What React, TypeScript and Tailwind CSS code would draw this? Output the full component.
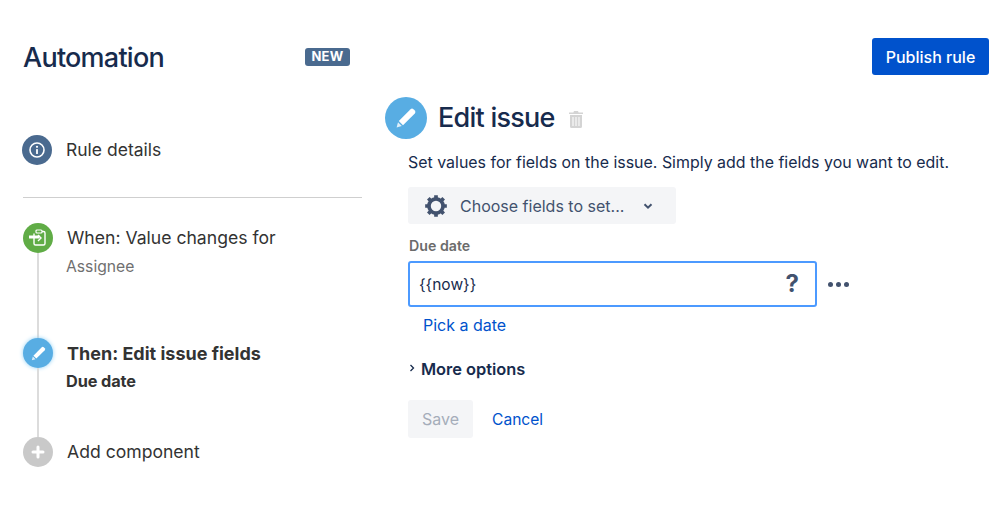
import React from "react";

function Pencil({ size }: { size: number }) {
  return (
    <svg width={size} height={size} viewBox="0 0 24 24" fill="none">
      <path d="M16.6 3.2a2 2 0 0 1 2.8 0l1.4 1.4a2 2 0 0 1 0 2.8L9 19.2l-4.2-4.2L16.6 3.2Z" fill="#fff" />
      <path d="M4 16.2 7.8 20 2.6 21.4 4 16.2Z" fill="#fff" opacity="0.8" />
    </svg>
  );
}

function Step({
  color,
  icon,
  title,
  sub,
  bold,
  line,
  glow,
  h,
}: {
  color: string;
  icon: React.ReactNode;
  title: string;
  sub?: string;
  bold?: boolean;
  line?: boolean;
  glow?: boolean;
  h: string;
}) {
  return (
    <div className={`flex ${h}`}>
      <div className="flex w-[30px] flex-col items-center">
        <div
          className={`flex h-[30px] w-[30px] shrink-0 items-center justify-center rounded-full ${color} ${
            glow ? "shadow-[0_0_4px_#8fd0f5]" : ""
          }`}
        >
          {icon}
        </div>
        {line && <div className="w-[2px] flex-1 bg-[#dcdcdc]" />}
      </div>
      <div className="ml-[14px]">
        <div
          className={`leading-[22px] text-[#333] ${bold ? "mt-[5px] text-[18px] font-bold" : "mt-[4px] text-[17.6px]"}`}
        >
          {title}
        </div>
        {sub && (
          <div
            className={`-ml-[1px] leading-[20px] ${
              bold
                ? "mt-[6px] text-[16.3px] font-bold tracking-[-0.1px] text-[#333]"
                : "mt-[8px] text-[15.7px] text-[#707070]"
            }`}
          >
            {sub}
          </div>
        )}
      </div>
    </div>
  );
}

export default function App() {
  return (
    <div className="flex h-[511px] w-[999px] overflow-hidden bg-white font-['Inter',sans-serif] antialiased">
      <div className="ml-[23px] w-[339px] shrink-0">
        <div className="mt-[38px] flex h-[38px] items-center justify-between pr-[12px]">
          <div className="pt-[1px] text-[27px] font-medium leading-[38px] tracking-[-0.75px] text-[#172b4d]">Automation</div>
          <div className="flex h-[18px] w-[45px] items-center justify-center rounded-[3px] bg-[#4a6a8f] text-[13px] font-bold tracking-[0.3px] text-white">
            NEW
          </div>
        </div>
        <div className="-ml-[1px] mt-[59px] flex h-[30px] items-center">
          <div className="flex h-[30px] w-[30px] items-center justify-center rounded-full bg-[#4a6a8f]">
            <svg width="18" height="18" viewBox="0 0 18 18" fill="none">
              <circle cx="9" cy="9" r="7" stroke="#fff" strokeWidth="1.6" />
              <rect x="8.1" y="8" width="1.8" height="5" rx="0.6" fill="#fff" />
              <circle cx="9" cy="5.8" r="1.1" fill="#fff" />
            </svg>
          </div>
          <div className="ml-[14px] pt-[1px] text-[17.5px] text-[#333]">Rule details</div>
        </div>
        <div className="mt-[32px] h-px bg-[#cfcfcf]" />
        <div className="mt-[25px]">
          <Step
            h="h-[115px]"
            color="bg-[#60ac46]"
            line
            title="When: Value changes for"
            sub="Assignee"
            icon={
              <svg width="20" height="20" viewBox="0 0 20 20" fill="none">
                <path d="M6 5.5V15.5a1.5 1.5 0 0 0 1.5 1.5h8a1.5 1.5 0 0 0 1.5-1.5V5a1.5 1.5 0 0 0-1.5-1.5H14" stroke="#fff" strokeWidth="1.4" />
                <rect x="8" y="2" width="6" height="3" rx="1" stroke="#fff" strokeWidth="1.2" />
                <path d="M1 9h10.5" stroke="#fff" strokeWidth="3" />
                <path d="M10 7l3 3-3 3" stroke="#fff" strokeWidth="1.4" />
              </svg>
            }
          />
          <Step h="h-[99px]" color="bg-[#58ade3]" line glow bold title="Then: Edit issue fields" sub="Due date" icon={<Pencil size={17} />} />
          <Step
            h="h-[30px]"
            color="bg-[#c9c9c9]"
            title="Add component"
            icon={
              <svg width="14" height="14" viewBox="0 0 14 14">
                <path d="M7 2v10M2 7h10" stroke="#fff" strokeWidth="3" strokeLinecap="round" />
              </svg>
            }
          />
        </div>
      </div>

      <div className="ml-[23px] flex-1 pr-[10px]">
        <div className="mt-[38px] flex justify-end">
          <div className="flex h-[37px] w-[117px] items-center justify-center rounded-[3px] bg-[#0052cc] text-[16px] font-medium text-white">
            Publish rule
          </div>
        </div>
        <div className="mt-[22px] flex h-[42px] items-center">
          <div className="flex h-[42px] w-[42px] items-center justify-center rounded-full bg-[#58ade3]">
            <Pencil size={24} />
          </div>
          <div className="ml-[11px] text-[27px] font-medium tracking-[-0.75px] text-[#172b4d]">Edit issue</div>
          <svg className="ml-[14px] mt-[2px]" width="14" height="17" viewBox="0 0 14 17" fill="#d4d4d4">
            <path d="M5 0h4l.6 1.5H14V3H0V1.5h4.4L5 0Z" />
            <path d="M1 4h12v11.5a1.5 1.5 0 0 1-1.5 1.5h-9A1.5 1.5 0 0 1 1 15.5V4Zm2.5 2v9h1V6h-1Zm3 0v9h1V6h-1Zm3 0v9h1V6h-1Z" fillRule="evenodd" />
          </svg>
        </div>
        <div className="ml-[23px]">
          <div className="mt-[12px] text-[15.95px] leading-[24px] text-[#172b4d]">
            Set values for fields on the issue. Simply add the fields you want to edit.
          </div>
          <div className="mt-[12px] flex h-[37px] w-[268px] items-center rounded-[3px] bg-[#f4f5f7] pl-[15px] text-[#42526e]">
            <svg width="26" height="26" viewBox="0 0 24 24" fill="none">
              <circle cx="12" cy="12" r="6.5" stroke="#42526e" strokeWidth="3.4" />
              <path
                d="M12 2v3M12 19v3M2 12h3M19 12h3M4.9 4.9 7 7M17 17l2.1 2.1M4.9 19.1 7 17M17 7l2.1-2.1"
                stroke="#42526e"
                strokeWidth="3.4"
              />
            </svg>
            <span className="ml-[11px] text-[16px]">Choose fields to set...</span>
            <svg className="ml-[18px]" width="12" height="12" viewBox="0 0 12 12" fill="none">
              <path d="M2.5 4.2 6 7.7l3.5-3.5" stroke="#42526e" strokeWidth="2" />
            </svg>
          </div>
          <div className="ml-[1px] mt-[12px] text-[14.2px] font-semibold leading-[20px] text-[#6b6b6b]">Due date</div>
          <div className="mt-[5px] flex items-center">
            <div className="flex h-[46px] w-[409px] items-center justify-between rounded-[3px] border-2 border-[#4c9aff] pl-[9px] pr-[16px]">
              <span className="pt-[1px] text-[15.5px] text-[#172b4d]">{"{{now}}"}</span>
              <span className="text-[24px] font-bold text-[#42526e]">?</span>
            </div>
            <div className="ml-[11px] flex gap-[3px]">
              <span className="h-[5px] w-[5px] rounded-full bg-[#42526e]" />
              <span className="h-[5px] w-[5px] rounded-full bg-[#42526e]" />
              <span className="h-[5px] w-[5px] rounded-full bg-[#42526e]" />
            </div>
          </div>
          <div className="ml-[15px] mt-[6px] text-[16px] leading-[24px] text-[#0052cc]">Pick a date</div>
          <div className="mt-[20px] flex items-center">
            <svg width="8" height="10" viewBox="0 0 8 10" fill="none" className="-mt-[2px]">
              <path d="M2.5 2l3 3-3 3" stroke="#172b4d" strokeWidth="1.3" />
            </svg>
            <span className="ml-[5px] text-[16.4px] font-semibold leading-[24px] text-[#172b4d]">More options</span>
          </div>
          <div className="mt-[19px] flex items-center">
            <div className="flex h-[38px] w-[65px] items-center justify-center rounded-[3px] bg-[#f4f5f7] text-[16px] text-[#a5adba]">
              Save
            </div>
            <div className="ml-[19px] pt-[1px] text-[15.6px] text-[#0052cc]">Cancel</div>
          </div>
        </div>
      </div>
    </div>
  );
}
